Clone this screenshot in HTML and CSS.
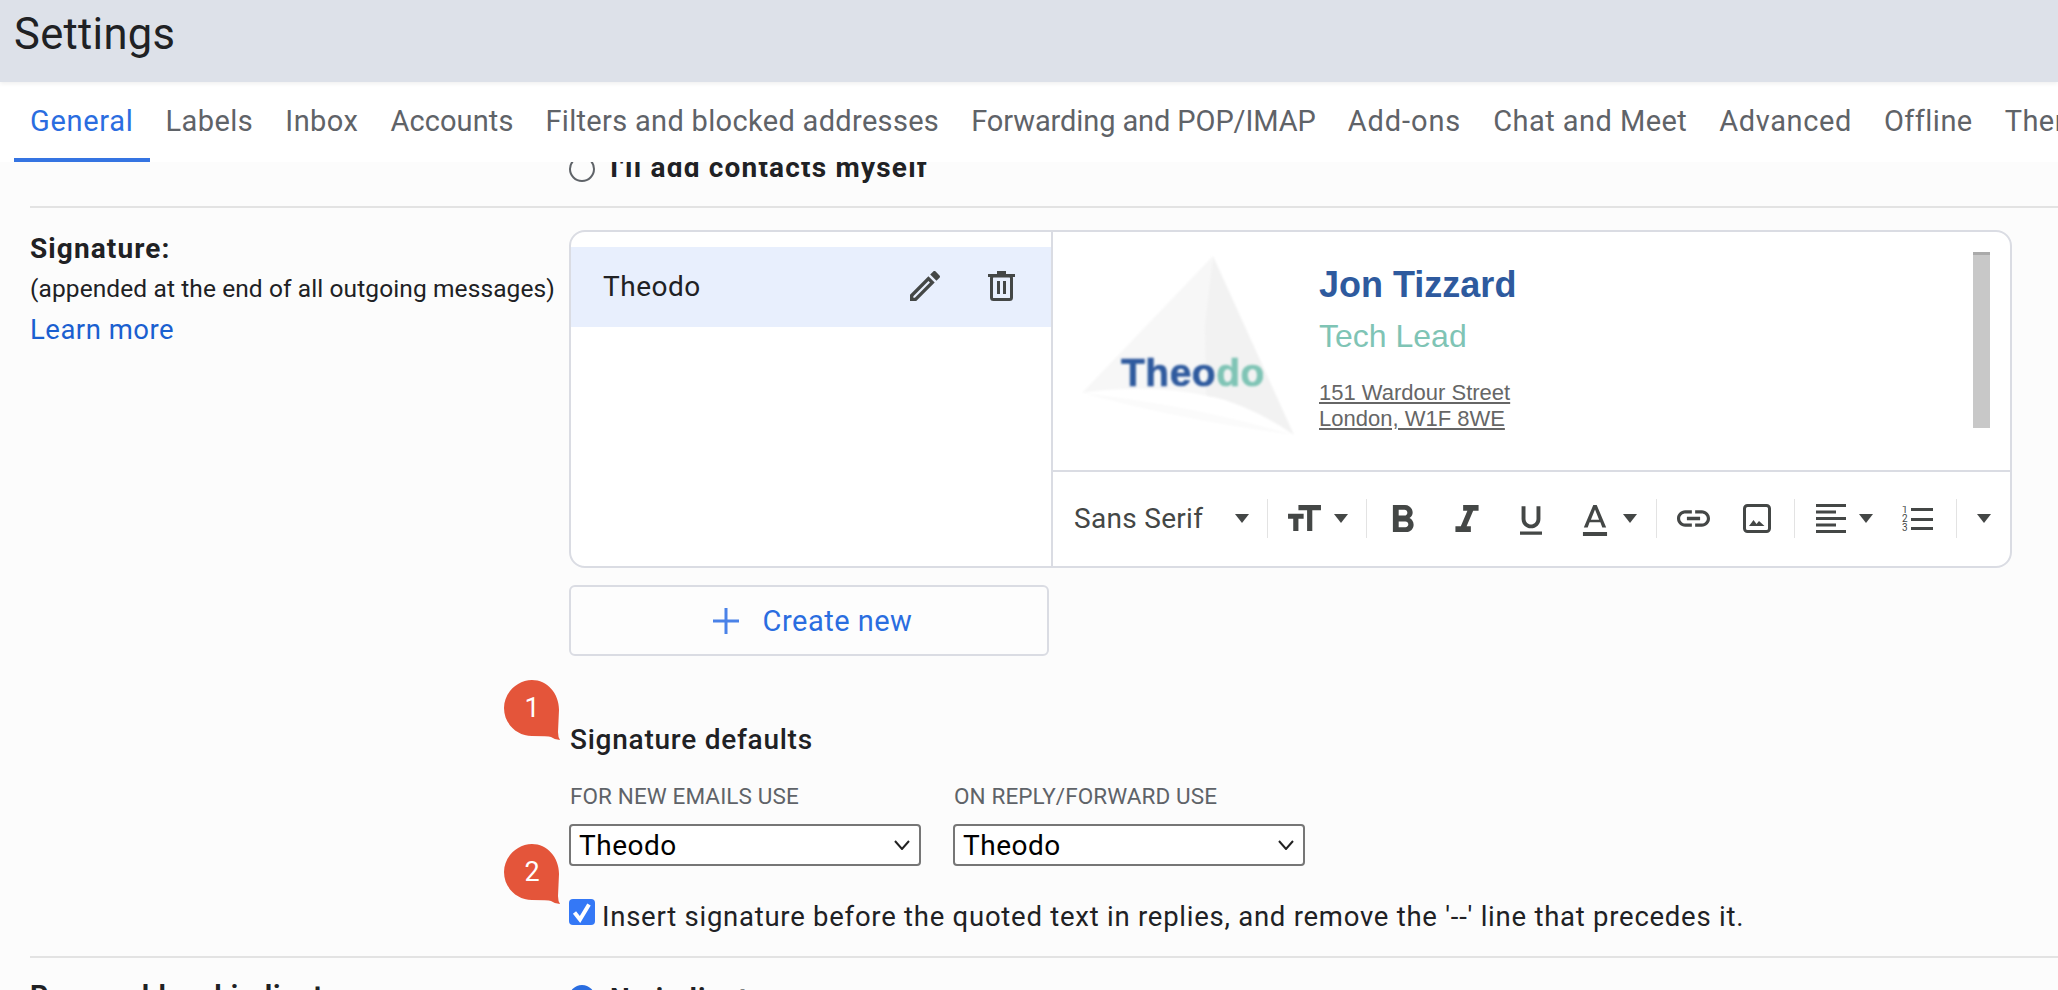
FILE: index.html
```html
<!DOCTYPE html>
<html>
	<head>
		<title>Settings</title>
		<link rel="stylesheet" href="styles.css">
	</head>

	<body>
		<header class="page-header">
			<h1 class="page-title">Settings</h1>
		</header>

		<nav class="tabs">
			<a class="tab active">General</a>
			<a class="tab">Labels</a>
			<a class="tab">Inbox</a>
			<a class="tab tab-tight">Accounts</a>
			<a class="tab tab-filters">Filters and blocked addresses</a>
			<a class="tab tab-forward">Forwarding and POP/IMAP</a>
			<a class="tab tab-addons">Add-ons</a>
			<a class="tab">Chat and Meet</a>
			<a class="tab tab-advanced">Advanced</a>
			<a class="tab">Offline</a>
			<a class="tab">Themes</a>
		</nav>

		<main class="settings">
			<section class="setting setting-contacts">
				<div></div>
				<div class="radio-line">
					<span class="radio"></span>
					<span class="strong contacts-text">I'll add contacts myself</span>
				</div>
			</section>

			<section class="setting setting-signature">
				<div class="setting-label">
					<div class="strong">Signature:</div>
					<div>(appended at the end of all outgoing messages)</div>
					<a class="link">Learn more</a>
				</div>

				<div>
					<div class="sig-card">
						<div class="sig-list">
							<div class="sig-item">
								<span class="sig-name">Theodo</span>
								<svg class="icon-pencil" viewBox="3 3 18 18"><path d="M3 17.25V21h3.75L17.81 9.94l-3.75-3.75L3 17.25zM5.92 19H5v-.92l9.06-9.06.92.92L5.92 19zM20.71 5.63l-2.34-2.34c-.2-.2-.45-.29-.71-.29s-.51.1-.7.29l-1.83 1.83 3.75 3.75 1.83-1.83c.39-.39.39-1.02 0-1.41z"/></svg>
								<svg class="icon-trash" viewBox="0 0 27 30">
									<rect x="0" y="3" width="27" height="3"/>
									<rect x="9" y="0" width="9" height="4"/>
									<rect class="trash-body" x="3.5" y="5" width="20" height="23.5" rx="2"/>
									<rect x="9" y="10" width="3" height="13"/>
									<rect x="15" y="10" width="3" height="13"/>
								</svg>
							</div>
						</div>

						<div class="sig-editor">
							<div class="sig-preview">
								<svg class="theodo-logo" viewBox="0 0 215 182">
									<defs>
										<filter id="soft"><feGaussianBlur stdDeviation="0.9"/></filter>
									</defs>
									<path d="M132 1 L1 138 Q70 128 132 142 Z" fill="#F7F7F7" filter="url(#soft)"/>
									<path d="M132 1 L213 180 Q170 150 125 140 L124 70 Z" fill="#F2F2F2" filter="url(#soft)"/>
									<path d="M1 138 Q110 150 213 180 Q100 165 1 138 Z" fill="#FBFBFB" filter="url(#soft)"/>
									<text class="logo-text" x="40" y="131" filter="url(#soft)">Theo<tspan class="logo-accent">do</tspan></text>
								</svg>

								<div class="sig-text">
									<div class="sig-person">Jon Tizzard</div>
									<div class="sig-role">Tech Lead</div>
									<div class="sig-address">151 Wardour Street<br>London, W1F 8WE</div>
								</div>

								<div class="sig-scroll"></div>
							</div>

							<div class="toolbar">
								<div class="tool-group group-font">
									<span class="font-name">Sans Serif</span>
									<svg class="caret" viewBox="0 0 14 9"><path d="M0 0h14L7 9z"/></svg>
								</div>
								<div class="tool-group group-size">
									<svg class="icon-size" viewBox="3 4 19 15"><path d="M9 4v3h5v12h3V7h5V4H9zm-6 8h3v7h3v-7h3V9H3v3z"/></svg>
									<svg class="caret" viewBox="0 0 14 9"><path d="M0 0h14L7 9z"/></svg>
								</div>
								<div class="tool-group group-style">
									<svg class="icon-bold" viewBox="7 4 11 14"><path d="M15.6 10.79c.97-.67 1.65-1.77 1.65-2.79 0-2.26-1.75-4-4-4H7v14h7.04c2.09 0 3.71-1.7 3.71-3.79 0-1.52-.86-2.82-2.15-3.42zM10 6.5h3c.83 0 1.5.67 1.5 1.5s-.67 1.5-1.5 1.5h-3v-3zm3.5 9H10v-3h3.5c.83 0 1.5.67 1.5 1.5s-.67 1.5-1.5 1.5z"/></svg>
									<svg class="icon-italic" viewBox="6 4 12 14"><path d="M10 4v3h2.21l-3.42 8H6v3h8v-3h-2.21l3.42-8H18V4z"/></svg>
									<svg class="icon-underline" viewBox="5 3 14 18"><path d="M12 17c3.31 0 6-2.69 6-6V3h-2.5v8c0 1.93-1.57 3.5-3.5 3.5S8.5 12.93 8.5 11V3H6v8c0 3.31 2.69 6 6 6zm-7 2v2h14v-2H5z"/></svg>
									<svg class="icon-color" viewBox="5 3 14 18"><path d="M11 3L5.5 16h2.25l1.12-3h6.25l1.12 3h2.25L13 3h-2zm-1.38 8.5L12 5.67l2.38 5.83H9.62zM5 18.7h14V21H5z"/></svg>
									<svg class="caret" viewBox="0 0 14 9"><path d="M0 0h14L7 9z"/></svg>
								</div>
								<div class="tool-group group-insert">
									<svg class="icon-link" viewBox="2 7 20 10"><path d="M3.9 12c0-1.71 1.39-3.1 3.1-3.1h4V7H7c-2.76 0-5 2.24-5 5s2.24 5 5 5h4v-1.9H7c-1.71 0-3.1-1.39-3.1-3.1zM8 13h8v-2H8v2zm9-6h-4v1.9h4c1.71 0 3.1 1.39 3.1 3.1s-1.39 3.1-3.1 3.1h-4V17h4c2.76 0 5-2.24 5-5s-2.24-5-5-5z"/></svg>
									<svg class="icon-image" viewBox="0 0 28 29">
										<rect class="image-frame" x="1.5" y="1.5" width="25" height="26" rx="3"/>
										<path d="M6 22l4.5-6 3 4 2.500-3 5.500 5z"/>
									</svg>
								</div>
								<div class="tool-group group-para">
									<svg class="icon-align" viewBox="0 0 30 29">
										<rect y="0" width="30" height="3"/>
										<rect y="6.500" width="20" height="3"/>
										<rect y="13" width="30" height="3"/>
										<rect y="19.500" width="20" height="3"/>
										<rect y="26" width="30" height="3"/>
									</svg>
									<svg class="caret" viewBox="0 0 14 9"><path d="M0 0h14L7 9z"/></svg>
									<svg class="icon-list" viewBox="0 0 31 25">
										<text class="list-number" x="0" y="7">1</text>
										<text class="list-number" x="0" y="16">2</text>
										<text class="list-number" x="0" y="25">3</text>
										<rect x="9" y="2" width="22" height="3"/>
										<rect x="9" y="12" width="22" height="3"/>
										<rect x="9" y="21" width="22" height="3"/>
									</svg>
								</div>
								<div class="tool-group group-more">
									<svg class="caret" viewBox="0 0 14 9"><path d="M0 0h14L7 9z"/></svg>
								</div>
							</div>
						</div>
					</div>

					<button class="create-btn">
						<svg class="icon-plus" viewBox="0 0 26 26"><path d="M11.500 0h3v11.500H26v3H14.500V26h-3V14.500H0v-3h11.500z"/></svg>
						Create new
					</button>

					<div class="defaults">
						<div class="defaults-title">
							<div class="bubble">
								<svg viewBox="0 0 56 61"><path d="M28 0C43 0 55 13 55 30L54 52Q54 57 56 60Q51 60 47 57Q44 56 28 56C13 56 0 44 0 28C0 13 13 0 28 0Z"/></svg>
								<span>1</span>
							</div>
							Signature defaults
						</div>

						<div class="defaults-fields">
							<div class="field">
								<div class="field-label">FOR NEW EMAILS USE</div>
								<div class="select">
									Theodo
									<svg class="chevron" viewBox="0 0 16 10"><path d="M1 1l7 8 7-8"/></svg>
								</div>
							</div>
							<div class="field">
								<div class="field-label">ON REPLY/FORWARD USE</div>
								<div class="select">
									Theodo
									<svg class="chevron" viewBox="0 0 16 10"><path d="M1 1l7 8 7-8"/></svg>
								</div>
							</div>
						</div>

						<div class="check-line">
							<div class="bubble bubble-check">
								<svg viewBox="0 0 56 61"><path d="M28 0C43 0 55 13 55 30L54 52Q54 57 56 60Q51 60 47 57Q44 56 28 56C13 56 0 44 0 28C0 13 13 0 28 0Z"/></svg>
								<span>2</span>
							</div>
							<span class="checkbox">
								<svg viewBox="0 0 26 26"><path d="M5.500 13.500l5.500 7 9-15"/></svg>
							</span>
							Insert signature before the quoted text in replies, and remove the '--' line that precedes it.
						</div>
					</div>
				</div>
			</section>

			<section class="setting setting-indicators">
				<div class="strong">Personal level indicators:</div>
				<div class="radio-line">
					<span class="radio radio-on"></span>
					<span class="strong">No indicators</span>
				</div>
			</section>
		</main>
	</body>
</html>
```
FILE: styles.css
```css
* {
	box-sizing: border-box;
}

html, body {
	height: 100%;
}

body {
	margin: 0;
	height: 990px;
	overflow: hidden;
	display: flex;
	flex-direction: column;
	background: #FCFCFC;
	color: #202124;
	font-family: Roboto, "Liberation Sans", sans-serif;
	font-size: 25px;
	letter-spacing: 0.3px;
}

.page-header {
	flex: none;
	height: 82px;
	padding-left: 14px;
	background: #DDE1E9;
	box-shadow: 0 2px 4px rgba(0, 0, 0, 0.06);
	position: relative;
	z-index: 2;
}

.page-title {
	margin: 0;
	font-size: 43.5px;
	font-weight: 400;
	line-height: 70px;
	letter-spacing: 0.3px;
}

.tabs {
	flex: none;
	display: flex;
	height: 80px;
	padding-left: 14px;
	background: white;
	overflow: hidden;
	position: relative;
	z-index: 1;
}

.tab {
	flex: none;
	padding: 0 16px;
	line-height: 79px;
	font-size: 29px;
	letter-spacing: 0.45px;
	color: #5F6368;
	white-space: nowrap;
}

.tab.active {
	color: #2A6DE0;
	letter-spacing: 0.7px;
	border-bottom: 4px solid #3574E2;
}

.tab-tight {
	letter-spacing: 0.1px;
}

.tab-filters {
	letter-spacing: 0.32px;
}

.tab-forward {
	letter-spacing: -0.1px;
}

.tab-addons {
	letter-spacing: 0.9px;
}

.tab-advanced {
	letter-spacing: 0.6px;
}

.settings {
	flex: 1;
	overflow: hidden;
}

.setting {
	display: grid;
	grid-template-columns: 539px 1fr;
	margin-left: 30px;
	border-bottom: 2px solid #E3E3E3;
}

.setting-contacts {
	height: 62px;
	margin-top: -16px;
}

.setting-signature {
	padding: 22px 0 22px;
}

.setting-indicators {
	padding-top: 21px;
	border-bottom: none;
}

.strong {
	font-weight: 700;
	font-size: 28px;
	letter-spacing: 1.1px;
}

.contacts-text {
	letter-spacing: 1.2px;
}

.radio-line {
	display: flex;
	align-items: flex-start;
	gap: 15px;
	line-height: 44px;
}

.radio {
	flex: none;
	width: 26px;
	height: 26px;
	margin-top: 10px;
	border: 2px solid #5F6368;
	border-radius: 50%;
}

.radio-on {
	margin-top: 6px;
	background: #2A6DE0;
	border-color: #2A6DE0;
}

.setting-label {
	margin-top: -1px;
	line-height: 40px;
	font-size: 24.5px;
	letter-spacing: 0.1px;
}

.link {
	display: block;
	margin-top: 1px;
	color: #1A5FD0;
	font-size: 27.5px;
	letter-spacing: 0.5px;
}

/* signature card */
.sig-card {
	display: flex;
	width: 1443px;
	height: 338px;
	background: white;
	border: 2px solid #DADCE3;
	border-radius: 16px;
	overflow: hidden;
}

.sig-list {
	flex: none;
	width: 482px;
	padding-top: 15px;
	border-right: 2px solid #DADCE3;
}

.sig-item {
	display: flex;
	align-items: center;
	height: 80px;
	padding-left: 32px;
	background: #E8EFFD;
}

.sig-name {
	flex: 1;
	font-size: 28px;
	letter-spacing: 0.5px;
	margin-top: -2px;
}

.sig-item svg {
	fill: #444746;
	margin-top: -2px;
}

.icon-pencil {
	width: 30px;
	height: 30px;
	margin-right: 48px;
}

.icon-trash {
	width: 27px;
	height: 30px;
	margin-right: 36px;
}

.icon-trash .trash-body {
	fill: none;
	stroke: #444746;
	stroke-width: 3;
}

.sig-editor {
	flex: 1;
	display: flex;
	flex-direction: column;
}

.sig-preview {
	display: flex;
	height: 240px;
	padding-top: 23px;
	border-bottom: 2px solid #DADCE3;
	font-family: "Liberation Sans", Arial, sans-serif;
	letter-spacing: 0;
}

.theodo-logo {
	flex: none;
	width: 215px;
	height: 182px;
	margin-left: 28px;
}

.logo-text {
	font-family: "Liberation Sans", Arial, sans-serif;
	font-size: 39px;
	font-weight: 700;
	letter-spacing: 0.5px;
	fill: #2E5A9E;
	stroke: #2E5A9E;
	stroke-width: 0.6;
}

.logo-accent {
	fill: #7FC4B5;
	stroke: #7FC4B5;
}

.sig-text {
	margin-left: 23px;
	padding-top: 10px;
}

.sig-person {
	font-size: 36px;
	font-weight: 700;
	line-height: 40px;
	color: #2E5A9E;
}

.sig-role {
	margin-top: 11px;
	font-size: 32px;
	line-height: 40px;
	color: #7FC4B5;
}

.sig-address {
	margin-top: 24px;
	font-size: 22px;
	line-height: 25.5px;
	color: #666;
	text-decoration: underline;
}

.sig-scroll {
	width: 17px;
	height: 176px;
	margin: -3px 20px 0 auto;
	background: #C8C8C8;
	border-top: 3px solid #AAA;
}

/* editor toolbar */
.toolbar {
	flex: 1;
	display: flex;
	align-items: center;
	padding-bottom: 2px;
}

.toolbar svg {
	flex: none;
	fill: #444746;
}

.tool-group {
	flex: none;
	display: flex;
	align-items: center;
	height: 39px;
	border-right: 1px solid #E3E3E3;
}

.group-font {
	width: 215px;
	padding-left: 21px;
}

.font-name {
	width: 161px;
	font-size: 28px;
	color: #444746;
}

.group-size {
	width: 99px;
	padding-left: 20px;
	gap: 13px;
}

.group-style {
	width: 290px;
	padding-left: 25px;
}

.group-insert {
	width: 138px;
	padding-left: 20px;
	gap: 33px;
}

.group-para {
	width: 162px;
	padding-left: 21px;
}

.group-more {
	padding-left: 20px;
	border-right: none;
}

.caret {
	width: 14px;
	height: 9px;
}

.icon-size {
	width: 33px;
	height: 26px;
}

.icon-bold {
	width: 23px;
	height: 27px;
	margin-right: 40px;
}

.icon-italic {
	width: 24px;
	height: 27px;
	margin-right: 41px;
}

.icon-underline {
	width: 22px;
	height: 31px;
	margin-top: 4px;
	margin-right: 40px;
}

.icon-color {
	width: 26px;
	height: 31px;
	margin-top: 4px;
	margin-right: 15px;
}

.icon-link {
	width: 33px;
	height: 17px;
}

.icon-image {
	width: 28px;
	height: 29px;
}

.image-frame {
	fill: none;
	stroke: #444746;
	stroke-width: 3;
}

.icon-align {
	width: 30px;
	height: 29px;
	margin-right: 13px;
}

.icon-list {
	width: 31px;
	height: 25px;
	margin-left: 29px;
}

.list-number {
	font-size: 10px;
	font-family: Roboto, sans-serif;
}

/* create button */
.create-btn {
	display: flex;
	align-items: center;
	justify-content: center;
	gap: 24px;
	width: 480px;
	height: 71px;
	margin-top: 17px;
	padding: 0 0 0 7px;
	background: #FDFDFD;
	border: 2px solid #DADCE3;
	border-radius: 6px;
	color: #2A6DE0;
	font-family: inherit;
	font-size: 29px;
	letter-spacing: 0.5px;
}

.icon-plus {
	width: 26px;
	height: 26px;
	fill: #4A82E8;
}

/* signature defaults */
.defaults-title {
	position: relative;
	margin-top: 64px;
	padding-left: 1px;
	font-size: 28px;
	font-weight: 500;
	letter-spacing: 0.75px;
	line-height: 40px;
}

.bubble {
	position: absolute;
	left: -65px;
	top: -40px;
	width: 56px;
	height: 61px;
	display: flex;
	justify-content: center;
	padding-top: 9px;
	color: white;
	font-size: 27px;
	letter-spacing: 0;
	font-weight: 400;
	line-height: 38px;
}

.bubble svg {
	position: absolute;
	top: 0;
	left: 0;
	width: 56px;
	height: 61px;
	fill: #E4553A;
}

.bubble span {
	position: relative;
}

.defaults-fields {
	display: flex;
	gap: 32px;
	margin-top: 21px;
}

.field {
	width: 352px;
}

.field-label {
	padding-left: 1px;
	font-size: 22.5px;
	line-height: 30px;
	letter-spacing: 0.1px;
	color: #5F6368;
}

.select {
	display: flex;
	align-items: center;
	justify-content: space-between;
	height: 42px;
	margin-top: 13px;
	padding: 0 9px 0 8px;
	background: white;
	border: 2px solid #767676;
	border-radius: 4px;
	font-size: 28px;
	letter-spacing: 0.5px;
	color: black;
}

.chevron {
	width: 16px;
	height: 10px;
	fill: none;
	stroke: #222;
	stroke-width: 2;
}

.check-line {
	position: relative;
	display: flex;
	align-items: center;
	gap: 7px;
	height: 36px;
	margin-top: 32px;
	font-size: 27.5px;
	letter-spacing: 0.75px;
	white-space: nowrap;
}

.checkbox {
	flex: none;
	width: 26px;
	height: 26px;
	margin-top: -9px;
	background: #3478F6;
	border-radius: 4px;
}

.checkbox svg {
	display: block;
	fill: none;
	stroke: white;
	stroke-width: 4;
}

.bubble-check {
	top: -54px;
}

.setting-indicators .radio-line {
	line-height: 40px;
}
```
